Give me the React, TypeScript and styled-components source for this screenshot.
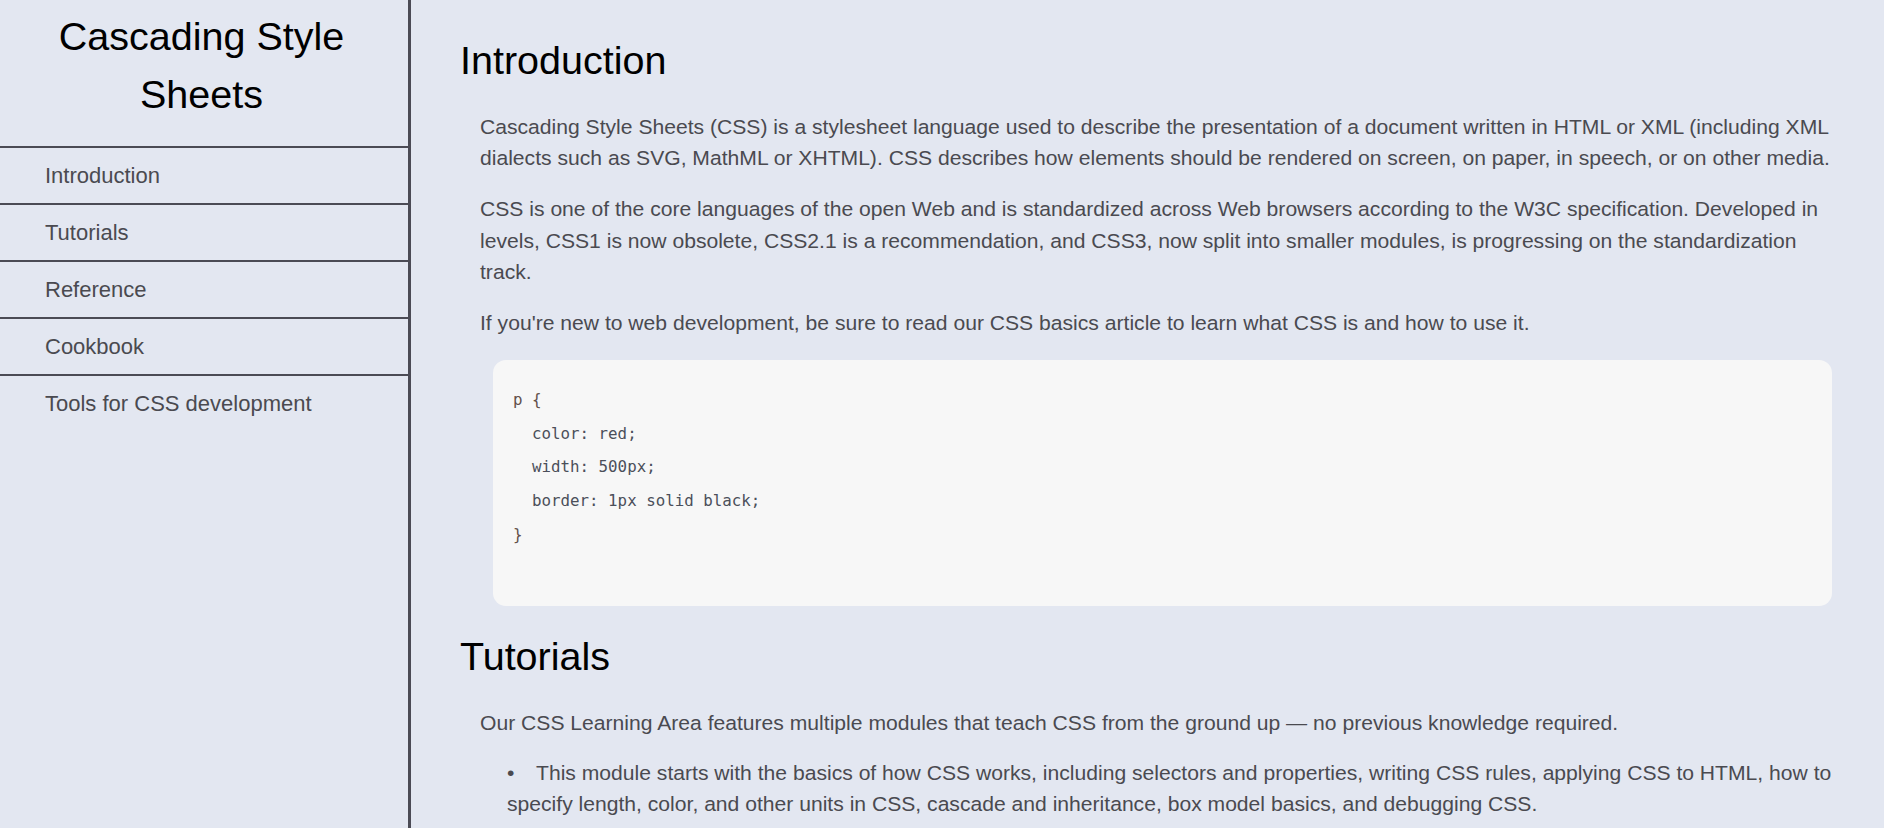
import React from "react";
import styled, { createGlobalStyle } from "styled-components";

const GlobalStyle = createGlobalStyle`
  html, body {
    margin: 0;
    padding: 0;
    background: #e3e7f1;
  }
  body {
    font-family: "Liberation Sans", Arial, sans-serif;
    color: #4a4a50;
  }
  * {
    box-sizing: border-box;
  }
`;

const Layout = styled.div`
  display: flex;
  min-height: 100vh;
  background: #e3e7f1;
`;

const Sidebar = styled.aside`
  flex: 0 0 411px;
  width: 411px;
  border-right: 3px solid #4b4b55;
  display: flex;
  flex-direction: column;
`;

const SiteTitle = styled.h1`
  margin: 0;
  padding: 7px 15px 23px 10px;
  font-size: 39.5px;
  line-height: 58px;
  font-weight: 400;
  color: #000;
  text-align: center;
  border-bottom: 2px solid #4b4b55;
`;

const NavList = styled.nav`
  display: flex;
  flex-direction: column;
`;

const NavItem = styled.a<{ $last?: boolean }>`
  display: block;
  padding: 12px 20px 12px 45px;
  font-size: 22px;
  line-height: 31px;
  color: #4a4a50;
  text-decoration: none;
  border-bottom: ${(p) => (p.$last ? "none" : "2px solid #4b4b55")};
`;

const Main = styled.main`
  flex: 1;
  min-width: 0;
  padding: 10px 52px 0 49px;
`;

const Section = styled.section``;

const Heading = styled.h2`
  margin: 28px 0;
  font-size: 39.5px;
  line-height: 45px;
  font-weight: 400;
  color: #000;
`;

const Body = styled.div`
  padding-left: 20px;
`;

const Para = styled.p`
  margin: 20px 0;
  font-size: 21.12px;
  line-height: 31.2px;
  color: #4a4a50;
`;

const CodeBlock = styled.pre`
  margin: 22px 0 0 13px;
  padding: 23px 20px 55px;
  background: #f7f7f7;
  border-radius: 13px;
  font-family: "DejaVu Sans Mono", "Liberation Mono", monospace;
  font-size: 15.8px;
  line-height: 33.6px;
  color: #4b4f5a;
  white-space: pre;
`;

const Brace = styled.span`
  color: #62504a;
`;

const BulletList = styled.ul`
  margin: 20px 0 0;
  padding-left: 27px;
  list-style: none;
`;

const BulletItem = styled.li`
  font-size: 21.12px;
  line-height: 30.8px;
  color: #4a4a50;

  &::before {
    content: "•";
    display: inline-block;
    width: 29px;
    color: #4a4a50;
  }
`;

const navItems = [
  "Introduction",
  "Tutorials",
  "Reference",
  "Cookbook",
  "Tools for CSS development",
];

export default function App() {
  return (
    <>
      <GlobalStyle />
      <Layout>
        <Sidebar>
          <SiteTitle>Cascading Style Sheets</SiteTitle>
          <NavList>
            {navItems.map((item, i) => (
              <NavItem
                key={item}
                href={`#${item.toLowerCase().replace(/\s+/g, "-")}`}
                $last={i === navItems.length - 1}
              >
                {item}
              </NavItem>
            ))}
          </NavList>
        </Sidebar>
        <Main>
          <Section id="introduction">
            <Heading>Introduction</Heading>
            <Body>
              <Para>
                Cascading Style Sheets (CSS) is a stylesheet language used to
                describe the presentation of a document written in HTML or XML
                (including XML dialects such as SVG, MathML or XHTML). CSS
                describes how elements should be rendered on screen, on paper,
                in speech, or on other media.
              </Para>
              <Para>
                CSS is one of the core languages of the open Web and is
                standardized across Web browsers according to the W3C
                specification. Developed in levels, CSS1 is now obsolete,
                CSS2.1 is a recommendation, and CSS3, now split into smaller
                modules, is progressing on the standardization track.
              </Para>
              <Para>
                If you're new to web development, be sure to read our CSS
                basics article to learn what CSS is and how to use it.
              </Para>
              <CodeBlock>
                <Brace>p {"{"}</Brace>
                {"\n  color: red;\n  width: 500px;\n  border: 1px solid black;\n"}
                <Brace>{"}"}</Brace>
              </CodeBlock>
            </Body>
          </Section>
          <Section id="tutorials">
            <Heading>Tutorials</Heading>
            <Body>
              <Para>
                Our CSS Learning Area features multiple modules that teach CSS
                from the ground up — no previous knowledge required.
              </Para>
              <BulletList>
                <BulletItem>
                  This module starts with the basics of how CSS works,
                  including selectors and properties, writing CSS rules,
                  applying CSS to HTML, how to specify length, color, and other
                  units in CSS, cascade and inheritance, box model basics, and
                  debugging CSS.
                </BulletItem>
              </BulletList>
            </Body>
          </Section>
        </Main>
      </Layout>
    </>
  );
}
